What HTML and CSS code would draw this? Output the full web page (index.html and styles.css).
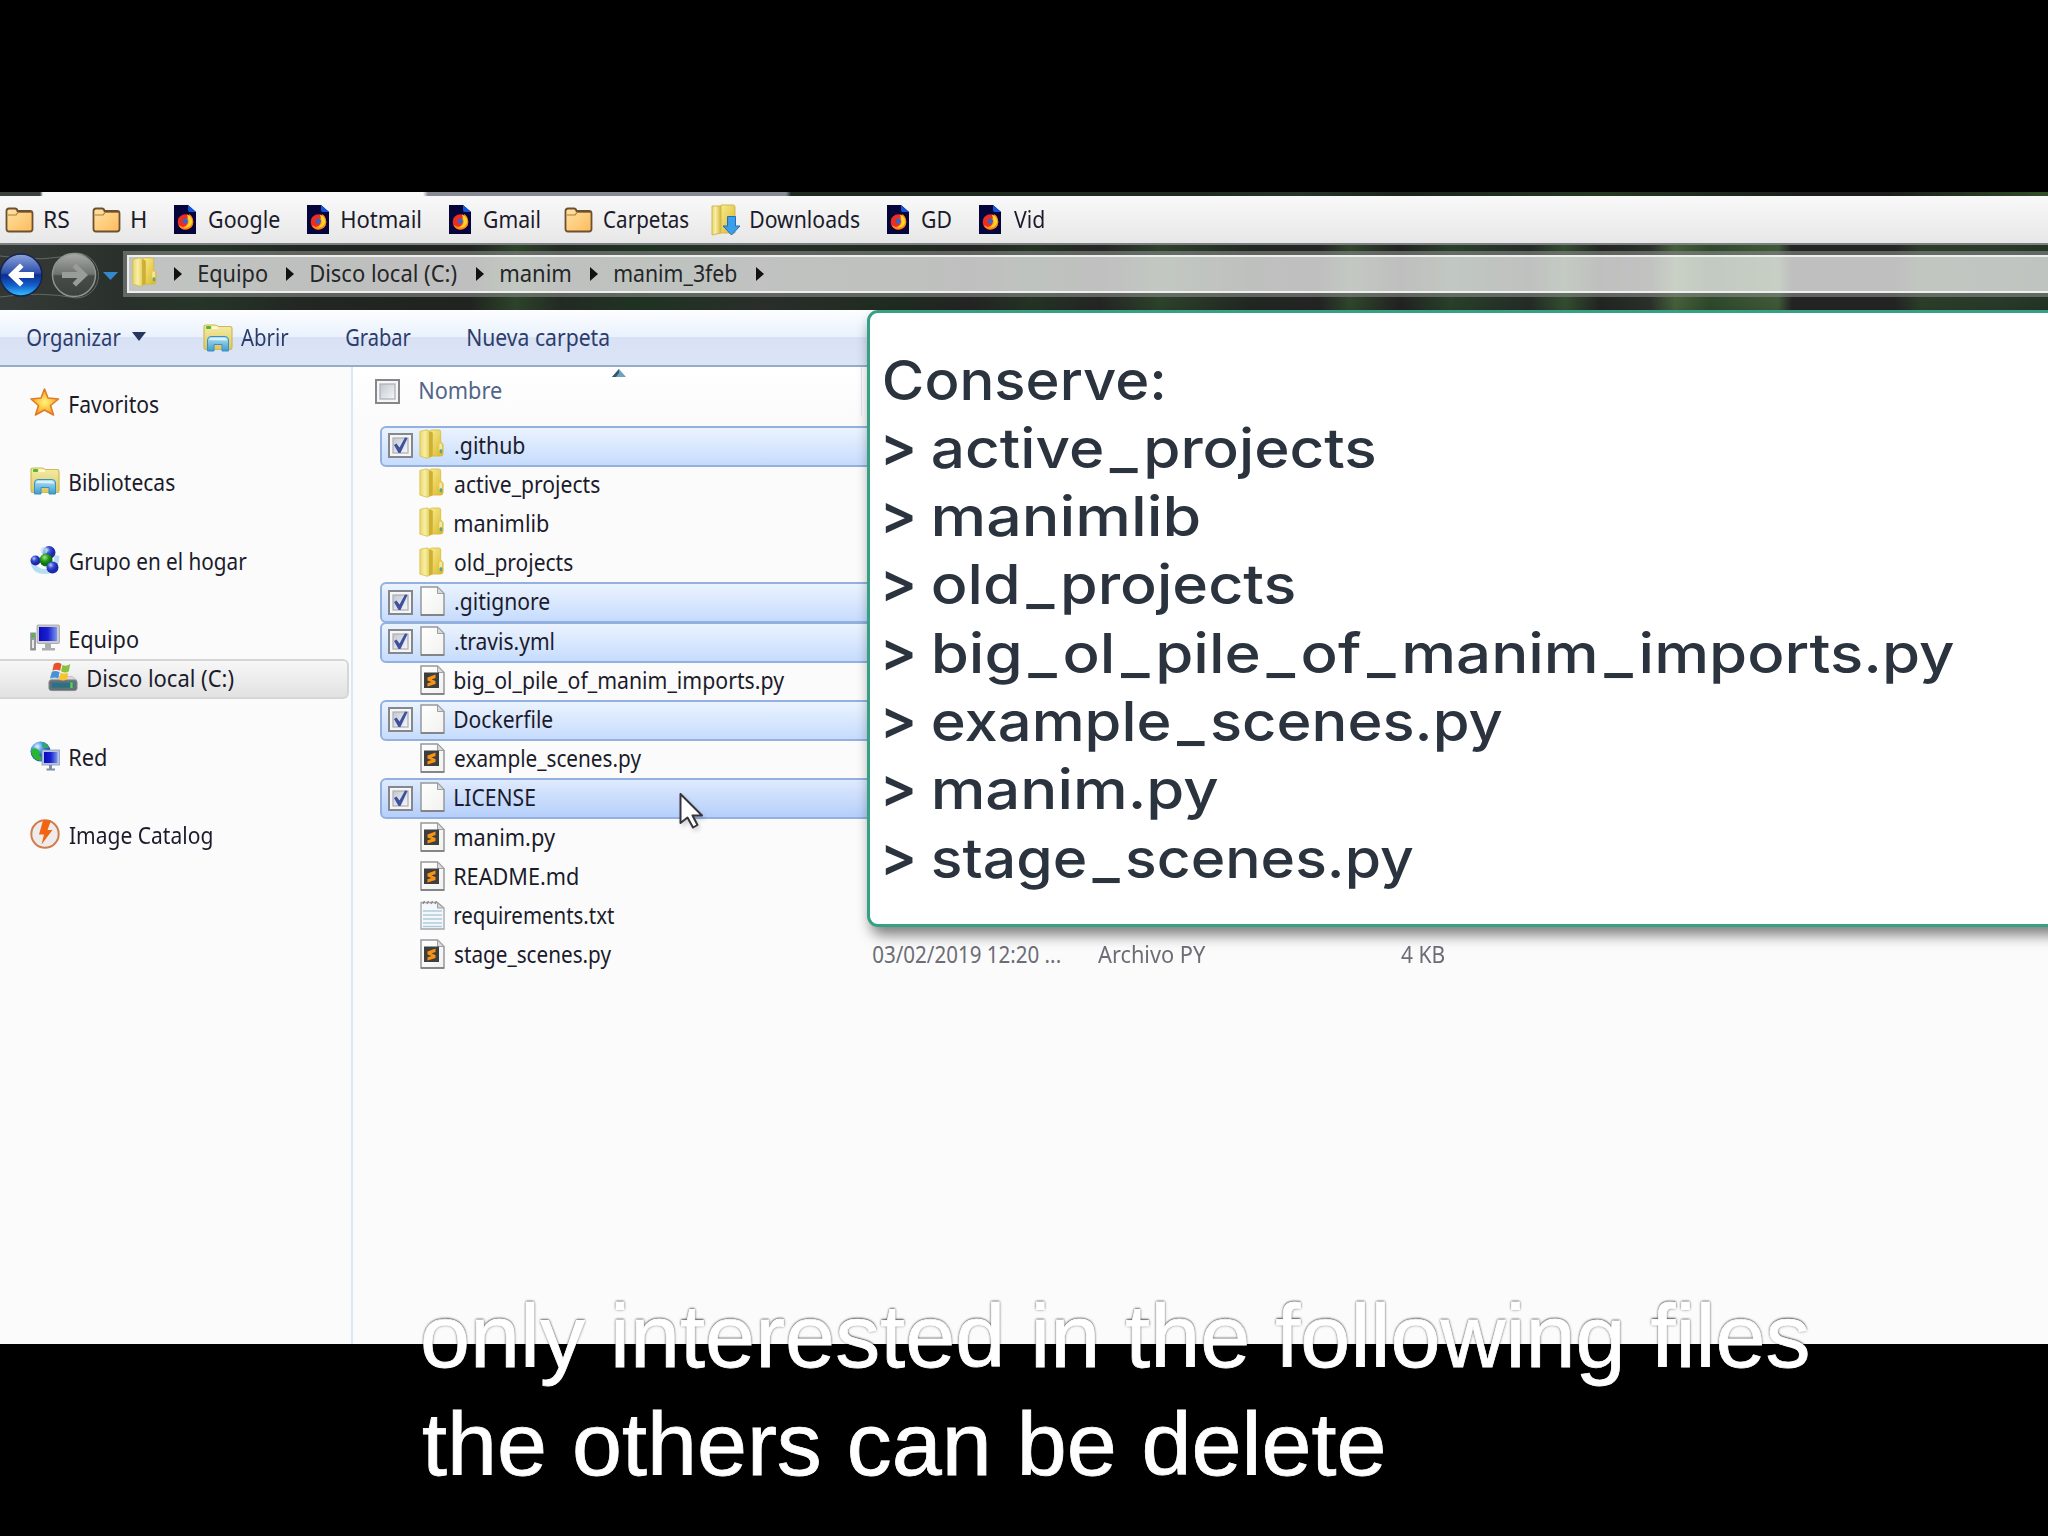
FILE: index.html
```html
<!DOCTYPE html>
<html lang="es">
<head>
<meta charset="utf-8">
<title>manim_3feb</title>
<link rel="stylesheet" href="styles.css">
</head>
<body>
<svg class="defs" width="0" height="0" aria-hidden="true">
  <defs>
    <linearGradient id="gOrange" x1="0" y1="0" x2="1" y2="1"><stop offset="0" stop-color="#ffe3a4"/><stop offset="1" stop-color="#fdbb5c"/></linearGradient>
    <linearGradient id="gYel" x1="0" y1="0" x2="1" y2="0"><stop offset="0" stop-color="#e9d66a"/><stop offset=".4" stop-color="#f8efa4"/><stop offset="1" stop-color="#d5b53a"/></linearGradient>
    <linearGradient id="gYel2" x1="0" y1="0" x2="1" y2="1"><stop offset="0" stop-color="#f7ec8e"/><stop offset="1" stop-color="#dcb526"/></linearGradient>
    <linearGradient id="gLib" x1="0" y1="0" x2="0" y2="1"><stop offset="0" stop-color="#f5eca6"/><stop offset="1" stop-color="#dcc75e"/></linearGradient>
    <linearGradient id="gCyan" x1="0" y1="0" x2="0" y2="1"><stop offset="0" stop-color="#b5e2f5"/><stop offset="1" stop-color="#3d9bd0"/></linearGradient>
    <linearGradient id="gBack" x1="0" y1="0" x2="0" y2="1"><stop offset="0" stop-color="#8da5dc"/><stop offset=".45" stop-color="#2d50ac"/><stop offset=".5" stop-color="#0b2c8f"/><stop offset=".75" stop-color="#1460cc"/><stop offset="1" stop-color="#35c5ff"/></linearGradient>
    <linearGradient id="gFwd" x1="0" y1="0" x2="0" y2="1"><stop offset="0" stop-color="#a8aba8"/><stop offset=".48" stop-color="#6f7471"/><stop offset=".52" stop-color="#474c49"/><stop offset="1" stop-color="#3b423d"/></linearGradient>
    <linearGradient id="gPage" x1="0" y1="0" x2="1" y2="1"><stop offset="0" stop-color="#ffffff"/><stop offset="1" stop-color="#f1f1ee"/></linearGradient>
    <linearGradient id="gScreen" x1="0" y1="0" x2="1" y2="0"><stop offset="0" stop-color="#0a0ac0"/><stop offset=".5" stop-color="#1a22d0"/><stop offset="1" stop-color="#7a96ee"/></linearGradient>
    <linearGradient id="gBox" x1="0" y1="0" x2="1" y2="1"><stop offset="0" stop-color="#c3c8d0"/><stop offset="1" stop-color="#f6f7f8"/></linearGradient>
    <radialGradient id="gStar"><stop offset="0" stop-color="#fff27a"/><stop offset="1" stop-color="#f9a51b"/></radialGradient>
    <radialGradient id="gBall" cx=".35" cy=".3"><stop offset="0" stop-color="#bccbff"/><stop offset=".5" stop-color="#3b50d8"/><stop offset="1" stop-color="#1c2aa8"/></radialGradient>
    <radialGradient id="gBallG" cx=".4" cy=".3"><stop offset="0" stop-color="#a3e68c"/><stop offset=".6" stop-color="#239a17"/><stop offset="1" stop-color="#107010"/></radialGradient>
    <radialGradient id="gGlobe" cx=".35" cy=".25"><stop offset="0" stop-color="#e5f4ff"/><stop offset=".5" stop-color="#54a0ea"/><stop offset="1" stop-color="#1c55b8"/></radialGradient>
  </defs>
  <symbol id="folder" viewBox="0 0 29 26"><path d="M1.5 8.5V4Q1.500 1.500 4 1.500H10Q12 1.500 12.500 4H25Q27.500 4 27.500 6.500V22Q27.500 24.500 25 24.500H4Q1.500 24.500 1.500 22Z" fill="url(#gOrange)" stroke="#6d5030" stroke-width="1.800"/><path d="M3 8H11L13 5.500H26" fill="none" stroke="#a77a42" stroke-width="1.200"/></symbol>
  <symbol id="fox" viewBox="0 0 22 29"><path d="M0 0H14L22 7V29H0Z" fill="#05053c"/><path d="M14 0 22 7H15.500Q14 7 14 5Z" fill="#1455dc"/><circle cx="11.500" cy="17" r="7.800" fill="#ef2b22"/><path d="M4.500 20A7.800 7.800 0 0 0 19.300 17Q19 11 15 9Q16 13 12 14Q16 20 9 22Z" fill="#ff8b14"/><path d="M13 9.500Q19 12 18 18Q16 23 10 22.500Q16 20 14.500 15Z" fill="#ffd629"/><circle cx="11.300" cy="16" r="2.600" fill="#3467cc"/><path d="M4.500 13Q7 11.500 10 13Q7 15 9 18Q5 18 4.500 13Z" fill="#e33420"/></symbol>
  <symbol id="download" viewBox="0 0 30 32"><path d="M1 2H10V29L1 31Z" fill="url(#gYel)" stroke="#d2b850"/><path d="M10 1H22Q24 1 24 3V29H10Z" fill="url(#gYel2)" stroke="#d2b850"/><path d="M16.500 12.500H24.500V22H29L20.500 31 12 22H16.500Z" fill="#3b9eea" stroke="#1f6fba"/></symbol>
  <symbol id="winfolder" viewBox="0 0 27 31"><path d="M12 2.500Q12 1 14 1H21Q23 1 23 3V13L25.500 16V25Q25.500 28 23 28H12Z" fill="url(#gYel2)" stroke="#d6b93f" stroke-width=".8"/><path d="M1.500 2.500 8 1Q10 .8 11 2L14.500 4V28L9 30.300 1.500 28Z" fill="url(#gYel)" stroke="#d6be4a" stroke-width=".8"/><path d="M11 2.500V29.500L14.500 28V4Z" fill="#cdb032"/><rect x="21.500" y="15" width="3" height="8" rx="1.500" fill="#f2e6a0"/><rect x="22" y="21" width="2.500" height="4" rx="1" fill="#52a893"/></symbol>
  <symbol id="library" viewBox="0 0 30 28"><path d="M1 3Q1 1 3 1H12Q14 1 15 2.500H27Q29 2.500 29 5V23Q29 25.500 27 25.500H3Q1 25.500 1 23Z" fill="url(#gLib)" stroke="#cdb957" stroke-width="1.200"/><rect x="3" y="2" width="5" height="3" rx="1" fill="#4fba2e"/><rect x="9" y="2.500" width="6" height="2.500" fill="#fff9d4"/><path d="M4.500 27V16Q4.500 12.500 8 12.500H22Q25.500 12.500 25.500 16V27H19V20.500H11V27Z" fill="url(#gCyan)" stroke="#3990c4"/><path d="M6 16Q6 14 9 14H21Q24 14 24 16.500Z" fill="#d8f1fb"/></symbol>
  <symbol id="star" viewBox="0 0 30 29"><path d="M14.500 .5 18 9.500 28.500 10.500 20.500 17 23.500 26.500 14.500 21.500 5.500 26.500 8.500 17 1 10.500 11 9.500Z" fill="url(#gStar)" stroke="#df7a2a" stroke-width="1.600" stroke-linejoin="round"/></symbol>
  <symbol id="homegroup" viewBox="0 0 30 29"><path d="M3 16Q4 26 15 26T27 10" fill="none" stroke="#b8dcf3" stroke-width="5"/><circle cx="19" cy="7" r="6.500" fill="url(#gBall)"/><circle cx="14" cy="5" r="3.500" fill="#bde3f5" opacity=".7"/><circle cx="5.500" cy="15" r="5" fill="url(#gBall)"/><circle cx="16" cy="14.500" r="6.500" fill="url(#gBallG)"/><circle cx="22.500" cy="22" r="6" fill="url(#gBall)"/></symbol>
  <symbol id="computer" viewBox="0 0 30 28"><rect x="7" y="1" width="22.500" height="18.500" rx="1" fill="#c9c9cb" stroke="#a2a2a6" stroke-width=".8"/><rect x="9" y="3" width="18" height="14" fill="url(#gScreen)"/><path d="M15 19.500H21V24H25V26.500H12V24H15Z" fill="#aaaeb1"/><rect x=".8" y="9" width="4.500" height="17" fill="#9b9da0" stroke="#787a7c" stroke-width=".8"/><rect x="1.500" y="10.500" width="3" height="3" fill="#3cc13a"/><rect x="2" y="16" width="2" height="8" fill="#e8e8e8"/></symbol>
  <symbol id="disk" viewBox="0 0 31 31"><path d="M2 19 7 15H25L30 19Z" fill="#d9dadb" stroke="#a9a9a9" stroke-width=".6"/><rect x="1" y="18.500" width="29" height="11" rx="2.500" fill="#60717a" stroke="#87898b"/><rect x="4" y="21.500" width="22" height="5" fill="#2d7083"/><rect x="23" y="21" width="2.500" height="6" fill="#52d44b"/><path d="M6 2Q10-.5 14 2L12.500 9Q8.500 7 4.500 9Z" fill="#e6532a"/><path d="M15 3Q19 5 23 2L21.500 9.500Q18 12 13.500 9.500Z" fill="#84c13c"/><path d="M4 10Q8 8.500 12 10.500L10.500 17Q6.500 15 2 17Z" fill="#4791d9"/><path d="M13 11Q17 13 21 11L19.500 18Q15 20 11.500 18Z" fill="#f9c32b"/></symbol>
  <symbol id="network" viewBox="0 0 30 30"><circle cx="10.500" cy="10.500" r="10" fill="url(#gGlobe)"/><path d="M1 10Q3 6 7 8T9 14Q12 15 11 20Q2 19 1 10Z" fill="#28b52f"/><path d="M13 1Q18 3 19 7Q14 8 12 5Z" fill="#31a86f"/><rect x="12" y="9" width="17.500" height="15" fill="#b9c5dc" stroke="#8a9abc" stroke-width=".8"/><rect x="14" y="11" width="13.500" height="11" fill="url(#gScreen)"/><path d="M19 24H22V27.500H25V29.500H16.500V27.500H19Z" fill="#7f8ea9"/></symbol>
  <symbol id="catalog" viewBox="0 0 30 30"><circle cx="15" cy="15" r="13.700" fill="#eeeceb" stroke="#d17c50" stroke-width="2"/><path d="M13 1.500H21L17.500 11H22.500L11.500 25.500 14 15.500H9Z" fill="#f26411"/></symbol>
  <symbol id="page" viewBox="0 0 25 30"><path d="M1 1H17.500L24 7.500V29H1Z" fill="url(#gPage)" stroke="#96989c" stroke-width="1.500"/><path d="M17.500 1V7.500H24Z" fill="#d9dbdd" stroke="#9c9ea2"/><path d="M1 29H24" stroke="#76787b" stroke-width="1.500"/></symbol>
  <symbol id="subl" viewBox="0 0 25 30"><use href="#page" width="25" height="30"/><rect x="4" y="7.500" width="15" height="15.500" fill="#3e3e3e"/><path d="M7.500 12.500 15.500 9.500V13L11.500 14.600 15.500 16V19L7.500 21.500V18.200L11.500 17 7.500 15.500Z" fill="#f99312"/></symbol>
  <symbol id="notes" viewBox="0 0 25 30"><path d="M1 2.500H17.500L24 8V29H1Z" fill="#f5f8fb" stroke="#a2a5a9" stroke-width="1.300"/><path d="M3 4 4.500 1M7 4 8.500 1M11 4 12.500 1M15 4 16.500 1" stroke="#85888c" stroke-width="1.300"/><path d="M17.500 3V8H24Z" fill="#d5d7d9" stroke="#9c9ea2"/><path d="M3 11H22M3 15H22M3 19H22M3 23H22M3 26.500H22" stroke="#aecbdc" stroke-width="1.300"/></symbol>
  <symbol id="box" viewBox="0 0 25 25"><rect x="1" y="1" width="23" height="23" fill="#f6f6f6" stroke="#85878a" stroke-width="2"/><rect x="5" y="5" width="15" height="15" fill="url(#gBox)" stroke="#aeb3b9" stroke-width="1.300"/></symbol>
  <symbol id="checked" viewBox="0 0 25 25"><use href="#box" width="25" height="25"/><path d="M6 12 8.500 10.500 11.500 14.500 17 4.500 19.500 5 12.500 20H10.500Z" fill="#3f50a0"/></symbol>
</svg>

<main class="stage">
  <div class="screen">
    <div class="tabstrip"></div>
    <nav class="bookmarks">
      <a class="mark"><svg class="i-folder"><use href="#folder"/></svg><span class="fit" data-w="24">RS</span></a>
      <a class="mark"><svg class="i-folder"><use href="#folder"/></svg><span class="fit" data-w="14">H</span></a>
      <a class="mark"><svg class="i-fox"><use href="#fox"/></svg><span class="fit" data-w="71">Google</span></a>
      <a class="mark"><svg class="i-fox"><use href="#fox"/></svg><span class="fit" data-w="79">Hotmail</span></a>
      <a class="mark"><svg class="i-fox"><use href="#fox"/></svg><span class="fit" data-w="56">Gmail</span></a>
      <a class="mark"><svg class="i-folder"><use href="#folder"/></svg><span class="fit" data-w="85">Carpetas</span></a>
      <a class="mark"><svg class="i-down"><use href="#download"/></svg><span class="fit" data-w="109">Downloads</span></a>
      <a class="mark"><svg class="i-fox"><use href="#fox"/></svg><span class="fit" data-w="29">GD</span></a>
      <a class="mark"><svg class="i-fox"><use href="#fox"/></svg><span class="fit" data-w="30">Vid</span></a>
    </nav>

    <div class="navbar">
      <svg class="arrows" viewBox="0 0 123 66">
        <path d="M0 13Q48 20 76 10A22 22 0 0 1 76 55Q40 48 0 54" fill="#323734" stroke="#626864"/>
        <circle cx="21" cy="32" r="21" fill="url(#gBack)" stroke="#18224a" stroke-width="1.500"/>
        <path d="M8 32 20 20.500 23.500 24 18.500 29H34V35H18.500L23.500 40 20 43.500Z" fill="#fff"/>
        <circle cx="74" cy="32" r="21.500" fill="url(#gFwd)" stroke="#8f9490" stroke-width="1.500"/>
        <path d="M88 32 76 20.500 72.500 24 77.500 29H62V35H77.500L72.500 40 76 43.500Z" fill="#999d9a"/>
        <path d="M103 29H118L110.500 37Z" fill="#3489cc"/>
      </svg>
      <div class="address">
        <svg class="i-win"><use href="#winfolder"/></svg>
        <div class="crumbs">
          <i class="chev"></i><span class="fit" data-w="68">Equipo</span>
          <i class="chev"></i><span class="fit" data-w="146">Disco local (C:)</span>
          <i class="chev"></i><span class="fit" data-w="70">manim</span>
          <i class="chev"></i><span class="fit" data-w="122">manim_3feb</span>
          <i class="chev"></i>
        </div>
      </div>
    </div>

    <div class="toolbar">
      <span class="tool organize"><span class="fit" data-w="94">Organizar</span><i class="caret"></i></span>
      <span class="tool open"><svg class="i-lib"><use href="#library"/></svg><span class="fit" data-w="48">Abrir</span></span>
      <span class="tool burn"><span class="fit" data-w="65">Grabar</span></span>
      <span class="tool"><span class="fit" data-w="141">Nueva carpeta</span></span>
    </div>

    <div class="explorer">
      <aside class="sidebar">
        <div class="place"><svg class="i-side"><use href="#star"/></svg><span class="fit" data-w="89">Favoritos</span></div>
        <div class="place"><svg class="i-side"><use href="#library"/></svg><span class="fit" data-w="105">Bibliotecas</span></div>
        <div class="place"><svg class="i-side"><use href="#homegroup"/></svg><span class="fit" data-w="177">Grupo en el hogar</span></div>
        <div class="group">
          <div class="place"><svg class="i-side"><use href="#computer"/></svg><span class="fit" data-w="68">Equipo</span></div>
          <div class="place current"><svg class="i-side"><use href="#disk"/></svg><span class="fit" data-w="146">Disco local (C:)</span></div>
        </div>
        <div class="place"><svg class="i-side"><use href="#network"/></svg><span class="fit" data-w="36">Red</span></div>
        <div class="place catalog"><svg class="i-side"><use href="#catalog"/></svg><span class="fit" data-w="143">Image Catalog</span></div>
      </aside>

      <section class="files">
        <header class="columns">
          <svg class="i-box"><use href="#box"/></svg><span class="fit" data-w="82">Nombre</span>
          <svg class="sort" viewBox="0 0 14 8"><path d="M0 8 7 0 14 8Z" fill="#6fa3bd"/><path d="M0 8 7 0V4L4 8Z" fill="#34566d"/></svg>
        </header>
        <div class="row sel"><svg class="i-box"><use href="#checked"/></svg><svg class="i-win"><use href="#winfolder"/></svg><span class="fit" data-w="70">.github</span></div>
        <div class="row"><i class="i-box"></i><svg class="i-win"><use href="#winfolder"/></svg><span class="fit" data-w="145">active_projects</span></div>
        <div class="row"><i class="i-box"></i><svg class="i-win"><use href="#winfolder"/></svg><span class="fit" data-w="94">manimlib</span></div>
        <div class="row"><i class="i-box"></i><svg class="i-win"><use href="#winfolder"/></svg><span class="fit" data-w="118">old_projects</span></div>
        <div class="row sel"><svg class="i-box"><use href="#checked"/></svg><svg class="i-file"><use href="#page"/></svg><span class="fit" data-w="95">.gitignore</span></div>
        <div class="row sel"><svg class="i-box"><use href="#checked"/></svg><svg class="i-file"><use href="#page"/></svg><span class="fit" data-w="99">.travis.yml</span></div>
        <div class="row"><i class="i-box"></i><svg class="i-file"><use href="#subl"/></svg><span class="fit" data-w="329">big_ol_pile_of_manim_imports.py</span></div>
        <div class="row sel"><svg class="i-box"><use href="#checked"/></svg><svg class="i-file"><use href="#page"/></svg><span class="fit" data-w="98">Dockerfile</span></div>
        <div class="row"><i class="i-box"></i><svg class="i-file"><use href="#subl"/></svg><span class="fit" data-w="186">example_scenes.py</span></div>
        <div class="row sel hot"><svg class="i-box"><use href="#checked"/></svg><svg class="i-file"><use href="#page"/></svg><span class="fit" data-w="80">LICENSE</span></div>
        <div class="row"><i class="i-box"></i><svg class="i-file"><use href="#subl"/></svg><span class="fit" data-w="100">manim.py</span></div>
        <div class="row"><i class="i-box"></i><svg class="i-file"><use href="#subl"/></svg><span class="fit" data-w="123">README.md</span></div>
        <div class="row"><i class="i-box"></i><svg class="i-file"><use href="#notes"/></svg><span class="fit" data-w="159">requirements.txt</span></div>
        <div class="row"><i class="i-box"></i><svg class="i-file"><use href="#subl"/></svg><span class="name"><span class="fit" data-w="156">stage_scenes.py</span></span><span class="meta date"><span class="fit" data-w="187">03/02/2019 12:20 ...</span></span><span class="meta type"><span class="fit" data-w="108">Archivo PY</span></span><span class="meta"><span class="fit" data-w="43">4 KB</span></span></div>
      </section>
    </div>

    <div class="note">
      <p><span class="fit" data-w="278">Conserve:</span></p>
      <p><span class="fit gt" data-w="28">&gt;</span><span class="fit" data-w="444">active_projects</span></p>
      <p><span class="fit gt" data-w="28">&gt;</span><span class="fit m" data-w="265">manimlib</span></p>
      <p><span class="fit gt" data-w="28">&gt;</span><span class="fit" data-w="364">old_projects</span></p>
      <p><span class="fit gt" data-w="28">&gt;</span><span class="fit m" data-w="1025">big_ol_pile_of_manim_imports.py</span></p>
      <p><span class="fit gt" data-w="28">&gt;</span><span class="fit" data-w="569">example_scenes.py</span></p>
      <p><span class="fit gt" data-w="28">&gt;</span><span class="fit m" data-w="284">manim.py</span></p>
      <p><span class="fit gt" data-w="28">&gt;</span><span class="fit" data-w="480">stage_scenes.py</span></p>
    </div>

    <svg class="cursor" viewBox="0 0 25 37"><path d="M1.500 2V31L8.500 25.500 14 35.500 18.500 33 13.500 23.500H23Z" fill="#fff" stroke="#35353b" stroke-width="2" stroke-linejoin="round"/></svg>
  </div>
  <div class="caption">
    <div><span class="fit" data-w="1385">only interested in the following files</span></div>
    <div><span class="fit" data-w="960">the others can be delete</span></div>
  </div>
</main>
<script src="fit.js"></script>
</body>
</html>
```
FILE: styles.css
```css
* { box-sizing: border-box; }
body { margin: 0; background: #000; }
.defs { position: absolute; }
.stage {
  position: relative;
  width: 2048px;
  height: 1536px;
  padding-top: 192px;
  overflow: hidden;
  background: #000;
  font: 23.500px/30px "Noto Sans", "Open Sans", sans-serif;
  color: #1b1b2c;
}
.screen {
  position: relative;
  height: 1152px;
  overflow: hidden;
  background: #fbfbfb;
}
svg, i { display: block; flex: none; }
.fit { display: block; flex: none; white-space: nowrap; }
.fit > b { display: inline-block; font-weight: inherit; transform-origin: 0 50%; }
.fit u { margin: 0 5px; text-decoration: none; }

.tabstrip {
  height: 4px;
  background: linear-gradient(90deg, #3c423e 40px, #f9f9f9 43px 423px, #868b94 428px 786px, #1f2b20 791px 1200px, #26362a 1300px, #1c241d 1400px, #243a22 1600px, #1d1f1d 1800px 1890px, #304f27);
}
.bookmarks {
  display: grid;
  grid-template-columns: 87px 77px 133px 142px 120px 147px 171px 92px auto;
  height: 47px;
  padding-left: 5px;
  background: linear-gradient(#f9f9f9, #e7e7e7);
}
.mark { display: grid; grid-template-columns: 40px auto; align-items: center; }
.mark .fit { margin-top: -1px; }
.i-folder { width: 29px; height: 26px; }
.i-fox { width: 22px; height: 29px; margin-left: 5px; }
.i-down { width: 30px; height: 32px; }

.navbar {
  display: flex;
  height: 67px;
  border-top: 2px solid #7d8083;
  background: linear-gradient(90deg, #353b38, #29302b 130px, #263528 200px, #222723 300px, #202320 470px, #2c4329 515px, #232a24 560px, #1f3322 640px, #292e2a 760px, #202b20 900px, #242424 970px, #243323 1030px, #252525 1100px, #2d422b 1160px, #222722 1250px, #242424 1320px, #30462c 1350px, #222 1400px, #29402a 1450px, #252b27 1530px, #334d30 1565px, #222522 1600px, #2b302a 1650px, #465f3b 1675px, #2e482b 1710px, #3f5938 1778px, #242424 1792px 1895px, #2c3d29 1920px, #29392a 2000px, #243425);
}
.arrows { width: 123px; height: 66px; margin-top: -2px; }
.address {
  display: flex;
  align-items: center;
  flex: 1;
  height: 38px;
  margin: 10px 0 0 4px;
  padding-left: 3px;
  border: solid #eee;
  border-width: 2px 0 2px 2px;
  background: rgba(255, 255, 255, .71);
  box-shadow: 0 0 0 4px rgba(130, 134, 131, .65);
  color: #252628;
}
.address .i-win { margin: -4px 16px 0 -1px; }
.i-win { width: 27px; height: 30px; }
.crumbs { display: flex; align-items: center; }
.crumbs .fit { margin-top: -3px; }
.chev { border: 7px solid transparent; border-left: 8px solid #111; border-right: 0; margin-right: 17px; }
.fit + .chev { margin-left: 19px; }

.toolbar {
  display: flex;
  height: 57px;
  padding-left: 27px;
  border-bottom: 2px solid #9aabc9;
  background: linear-gradient(#fdfeff, #e9f1fd 49%, #d9e2f4 50%, #dae5f7);
  color: #2d3d6b;
}
.tool { display: flex; align-items: center; padding-bottom: 2px; }
.organize { width: 176px; gap: 11px; }
.caret { border: 7.500px solid transparent; border-top: 9px solid #26365f; border-bottom: 0; }
.open { width: 143px; gap: 8px; }
.i-lib { width: 30px; height: 28px; margin-top: 2px; }
.burn { width: 122px; }

.explorer { display: flex; height: 977px; }
.sidebar {
  display: flex;
  flex-direction: column;
  gap: 39.200px;
  flex: none;
  width: 353px;
  padding-top: 18px;
  border-right: 2px solid #dbe7f3;
}
.place {
  display: flex;
  align-items: center;
  gap: 10px;
  height: 39.200px;
  padding-left: 30px;
}
.place .fit { margin-top: -1px; }
.catalog { gap: 9px; }
.i-side { width: 30px; height: 30px; margin-top: -3px; }
.current {
  margin-right: 2px;
  padding-left: 48px;
  border: 2px solid #d6d6d6;
  border-left: 0;
  border-radius: 0 6px 6px 0;
  background: linear-gradient(#f7f7f7, #e2e2e2);
}

.files { flex: 1; min-width: 0; padding-left: 27px; background: linear-gradient(#fff, #fbfbfb 50px); }
.columns {
  position: relative;
  display: flex;
  align-items: center;
  gap: 20px;
  width: 487px;
  height: 49px;
  margin: 0 0 9.500px -5px;
  border-right: 1px solid #e2e8f2;
  color: #53648b;
}
.i-box { width: 25px; height: 25px; }
.columns .fit { margin-top: -3px; }
.sort { position: absolute; left: 237px; top: 2px; width: 14px; height: 8px; }
.row {
  display: flex;
  align-items: center;
  height: 41px;
  margin-bottom: -1.800px;
  padding-left: 6px;
  border: 2px solid transparent;
  border-radius: 6px 0 0 6px;
}
.row .i-box { margin-top: -1px; }
.row .fit { margin: -3px 0 0 10px; }
.row .i-win { margin: -4px 0 0 5px; }
.i-file { width: 25px; height: 30px; margin: -3px 0 0 7px; }
.row .i-file + * { margin-left: 10px; }
.sel { border-color: #94b0de; background: linear-gradient(#ebf3fe, #c6dcfd); }
.hot { background: linear-gradient(#dfeafd, #b5cffb); }
.name { width: 418px; }
.name .fit, .meta .fit { margin-left: 0; }
.meta { color: #6c6d76; }
.date { width: 225px; }
.type { width: 303px; }

.note {
  position: absolute;
  left: 867px;
  top: 118px;
  width: 1200px;
  height: 617px;
  padding: 32.500px 0 0 15px;
  border: 3px solid #36a085;
  border-radius: 11px;
  background: #fff;
  box-shadow: 4px 8px 14px rgba(0, 0, 0, .5);
  color: #2b343e;
  font: 500 55px/68.300px Inter, sans-serif;
}
.note p { display: flex; gap: 20px; height: 68.300px; margin: 0; }
.note .m { margin-left: 1px; }
.note .gt { margin-top: -2px; font-weight: 600; }
.cursor { position: absolute; left: 679px; top: 600px; width: 25px; height: 37px; filter: drop-shadow(2px 3px 2px rgba(0, 0, 0, .15)); }

.caption {
  position: absolute;
  left: 423px;
  top: 1282px;
  color: #fff;
  font: 89px/108px "Liberation Sans", Arial, sans-serif;
  -webkit-text-stroke: .8px #fff;
  text-shadow: 0 -1px 2px rgba(0, 0, 0, .6), 0 0 3px rgba(0, 0, 0, .6);
}
```
FILE: fit.js
```js
// Scale every label horizontally so that its ink fills its column width.
const ctx = document.createElement('canvas').getContext('2d');
document.querySelectorAll('.fit').forEach((el) => {
  const w = Number(el.dataset.w);
  const text = el.textContent;
  ctx.font = getComputedStyle(el).font;
  const m = ctx.measureText(text);
  const inner = document.createElement('b');
  inner.textContent = text;
  let extra = 0;
  if (el.closest('.note')) {
    // The note sets its underscores apart, 5px on either side.
    extra = (text.split('_').length - 1) * 10;
    inner.innerHTML = inner.innerHTML.replace(/_/g, '<u>_</u>');
  }
  const s = w / (m.actualBoundingBoxLeft + m.actualBoundingBoxRight + extra);
  inner.style.transform = `translateX(${m.actualBoundingBoxLeft * s}px) scaleX(${s})`;
  el.textContent = '';
  el.style.width = `${w}px`;
  el.append(inner);
});
```
